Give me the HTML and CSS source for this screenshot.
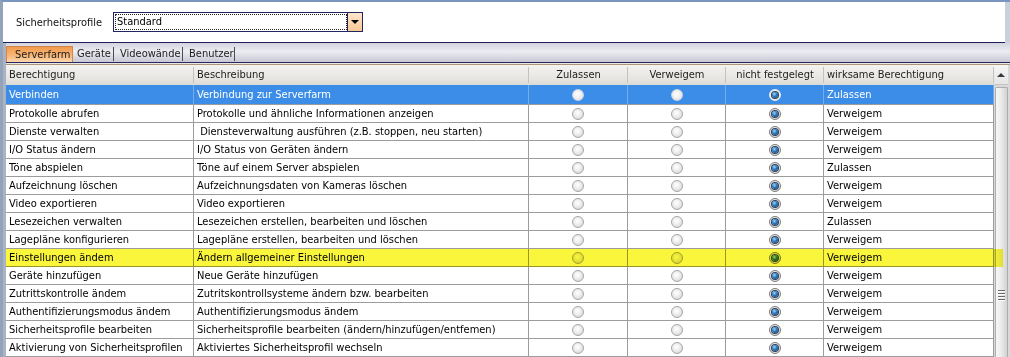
FILE: index.html
```html
<!DOCTYPE html>
<html lang="de">
<head>
<meta charset="utf-8">
<title>Sicherheitsprofile</title>
<link rel="stylesheet" href="styles.css">
</head>
<body>
<div class="window">
  <div class="top">
    <span class="label">Sicherheitsprofile</span>
    <div class="combo">
      <span class="combo-value">Standard</span>
      <span class="combo-btn"><span class="tri-down"></span></span>
    </div>
  </div>
  <div class="lower">
    <div class="tabstrip">
      <div class="tab active">Serverfarm</div>
      <div class="tab t2">Geräte</div>
      <div class="tab t3">Videowände</div>
      <div class="tab t4">Benutzer</div>
    </div>
    <div class="sep"></div>
    <div class="gridwrap">
      <div class="grid">
        <div class="row head">
          <div>Berechtigung</div>
          <div>Beschreibung</div>
          <div class="c">Zulassen</div>
          <div class="c">Verweigem</div>
          <div class="c">nicht festgelegt</div>
          <div>wirksame Berechtigung</div>
        </div>
        <div class="row first sel">
          <div>Verbinden</div><div>Verbindung zur Serverfarm</div>
          <div class="r"><span class="radio"></span></div><div class="r"><span class="radio"></span></div><div class="r"><span class="radio on"></span></div>
          <div>Zulassen</div>
        </div>
        <div class="row">
          <div>Protokolle abrufen</div><div>Protokolle und ähnliche Informationen anzeigen</div>
          <div class="r"><span class="radio"></span></div><div class="r"><span class="radio"></span></div><div class="r"><span class="radio on"></span></div>
          <div>Verweigem</div>
        </div>
        <div class="row">
          <div>Dienste verwalten</div><div>&nbsp;Diensteverwaltung ausführen (z.B. stoppen, neu starten)</div>
          <div class="r"><span class="radio"></span></div><div class="r"><span class="radio"></span></div><div class="r"><span class="radio on"></span></div>
          <div>Verweigem</div>
        </div>
        <div class="row">
          <div>I/O Status ändern</div><div>I/O Status von Geräten ändern</div>
          <div class="r"><span class="radio"></span></div><div class="r"><span class="radio"></span></div><div class="r"><span class="radio on"></span></div>
          <div>Verweigem</div>
        </div>
        <div class="row">
          <div>Töne abspielen</div><div>Töne auf einem Server abspielen</div>
          <div class="r"><span class="radio"></span></div><div class="r"><span class="radio"></span></div><div class="r"><span class="radio on"></span></div>
          <div>Zulassen</div>
        </div>
        <div class="row">
          <div>Aufzeichnung löschen</div><div>Aufzeichnungsdaten von Kameras löschen</div>
          <div class="r"><span class="radio"></span></div><div class="r"><span class="radio"></span></div><div class="r"><span class="radio on"></span></div>
          <div>Verweigem</div>
        </div>
        <div class="row">
          <div>Video exportieren</div><div>Video exportieren</div>
          <div class="r"><span class="radio"></span></div><div class="r"><span class="radio"></span></div><div class="r"><span class="radio on"></span></div>
          <div>Verweigem</div>
        </div>
        <div class="row">
          <div>Lesezeichen verwalten</div><div>Lesezeichen erstellen, bearbeiten und löschen</div>
          <div class="r"><span class="radio"></span></div><div class="r"><span class="radio"></span></div><div class="r"><span class="radio on"></span></div>
          <div>Zulassen</div>
        </div>
        <div class="row">
          <div>Lagepläne konfigurieren</div><div>Lagepläne erstellen, bearbeiten und löschen</div>
          <div class="r"><span class="radio"></span></div><div class="r"><span class="radio"></span></div><div class="r"><span class="radio on"></span></div>
          <div>Verweigem</div>
        </div>
        <div class="row">
          <div>Einstellungen ändem</div><div>Ändern allgemeiner Einstellungen</div>
          <div class="r"><span class="radio"></span></div><div class="r"><span class="radio"></span></div><div class="r"><span class="radio on"></span></div>
          <div>Verweigem</div>
        </div>
        <div class="row">
          <div>Geräte hinzufügen</div><div>Neue Geräte hinzufügen</div>
          <div class="r"><span class="radio"></span></div><div class="r"><span class="radio"></span></div><div class="r"><span class="radio on"></span></div>
          <div>Verweigem</div>
        </div>
        <div class="row">
          <div>Zutrittskontrolle ändem</div><div>Zutritskontrollsysteme ändern bzw. bearbeiten</div>
          <div class="r"><span class="radio"></span></div><div class="r"><span class="radio"></span></div><div class="r"><span class="radio on"></span></div>
          <div>Verweigem</div>
        </div>
        <div class="row">
          <div>Authentifizierungsmodus ändem</div><div>Authentifizierungsmodus ändem</div>
          <div class="r"><span class="radio"></span></div><div class="r"><span class="radio"></span></div><div class="r"><span class="radio on"></span></div>
          <div>Verweigem</div>
        </div>
        <div class="row">
          <div>Sicherheitsprofile bearbeiten</div><div>Sicherheitsprofile bearbeiten (ändern/hinzufügen/entfemen)</div>
          <div class="r"><span class="radio"></span></div><div class="r"><span class="radio"></span></div><div class="r"><span class="radio on"></span></div>
          <div>Verweigem</div>
        </div>
        <div class="row">
          <div>Aktivierung von Sicherheitsprofilen</div><div>Aktiviertes Sicherheitsprofil wechseln</div>
          <div class="r"><span class="radio"></span></div><div class="r"><span class="radio"></span></div><div class="r"><span class="radio on"></span></div>
          <div>Verweigem</div>
        </div>
      </div>
      <div class="scrollbar">
        <div class="sb-up"><span class="tri-up"></span></div>
        <div class="sb-thumb">
          <div class="grip"><i></i><i></i><i></i><i></i></div>
        </div>
      </div>
      <div class="highlight"></div>
    </div>
  </div>
</div>
</body>
</html>
```

FILE: styles.css
```css
html, body {
  margin: 0;
  padding: 0;
  background: #c9d1dc;
}
body {
  font-family: "DejaVu Sans Condensed", "DejaVu Sans", sans-serif;
  font-size: 11px;
  color: #000;
}
.window {
  width: 1010px;
  height: 357px;
  overflow: hidden;
  box-sizing: border-box;
  border-top: 2px solid #7995c0;
  border-left: 3px solid #93a3ba;
  background: #c9d1dc;
}
.top {
  height: 40px;
  margin-right: 5px;
  background: #fff;
  border-bottom: 1px solid #1f1f5e;
  display: flex;
  align-items: center;
  padding-left: 13px;
}
.label {
  width: 97px;
  color: #111;
}
.combo {
  width: 250px;
  height: 20px;
  box-sizing: border-box;
  border: 1px solid #23235f;
  display: flex;
  background: #fff;
}
.combo-value {
  flex: 1;
  margin: 1px 0 1px 1px;
  border: 1px dotted #222;
  padding-left: 1px;
  line-height: 14px;
}
.combo-btn {
  width: 14px;
  border-left: 1px solid #23235f;
  background: linear-gradient(#fde6cc, #f9c896);
  display: flex;
  align-items: center;
  justify-content: center;
}
.tri-down {
  width: 0;
  height: 0;
  border-left: 4px solid transparent;
  border-right: 4px solid transparent;
  border-top: 4px solid #000;
}
.lower {
  border-left: 3px solid #a9b3c4;
}
.tabstrip {
  height: 19px;
  border-bottom: 1px solid #27275f;
  background: linear-gradient(#d4d4df, #ececf1 45%, #c8c8d6);
  display: flex;
  align-items: flex-end;
}
.tab {
  box-sizing: border-box;
  height: 14px;
  line-height: 13px;
  color: #1c1c1c;
  border-right: 1px solid #4a4a5a;
  margin-bottom: 1px;
  white-space: nowrap;
}
.tab.active {
  width: 67px;
  height: 16px;
  line-height: 15px;
  margin-bottom: 0;
  padding-left: 8px;
  border: 1px solid #d0864a;
  border-bottom: none;
  background: linear-gradient(#f39a4c, #f8b676 55%, #fcd6ac);
}
.t2 { width: 41px; padding-left: 4px; }
.t3 { width: 69px; padding-left: 6px; }
.t4 { width: 52px; padding-left: 6px; }
.sep {
  height: 1px;
  background: #ebe8e3;
}
.gridwrap {
  position: relative;
  display: flex;
  height: 300px;
  border-top: 1px solid #ab967c;
  background: #fff;
}
.grid {
  width: 988px;
}
.row {
  display: grid;
  grid-template-columns: 188px 335px 99px 98px 98px 170px;
  height: 18px;
}
.row > div {
  box-sizing: border-box;
  border-right: 1px solid #9c9c9c;
  border-bottom: 1px solid #9c9c9c;
  padding-left: 3px;
  line-height: 17px;
  white-space: nowrap;
  overflow: hidden;
}
.row.first {
  height: 20px;
}
.row.first > div {
  line-height: 19px;
}
.row .r {
  padding-left: 0;
  display: flex;
  align-items: center;
  justify-content: center;
}
.row.head {
  height: 20px;
  background: linear-gradient(#f4f3f0, #e6e5e1 70%, #dcdad5);
}
.row.head > div {
  position: relative;
  border-right: none;
  border-bottom: none;
  line-height: 20px;
  color: #1c1c1c;
}
.row.head > div::after {
  content: "";
  position: absolute;
  right: 0;
  top: 2px;
  bottom: 2px;
  width: 1px;
  background: #c6c3bd;
  box-shadow: 1px 0 0 #fbfbfa;
}
.row.head > .c {
  padding-left: 0;
  text-align: center;
}
.row.sel > div {
  background: #3b8de8;
  color: #fff;
  border-right-color: #74adec;
}
.radio {
  width: 12px;
  height: 12px;
  box-sizing: border-box;
  border-radius: 50%;
  border: 1px solid #a6a6a6;
  background: radial-gradient(circle at 45% 40%, #ffffff 0, #f1f1f1 35%, #d0d0d0 100%);
  display: flex;
  align-items: center;
  justify-content: center;
}
.radio.on {
  border-color: #7c7c7c;
}
.radio.on::after {
  content: "";
  width: 6px;
  height: 6px;
  border-radius: 50%;
  background: radial-gradient(circle at 40% 35%, #a6d8f8 0, #2f7fc4 40%, #0c3260 100%);
  box-shadow: 0 0 0 1px #2b3d57;
}
.row.sel .radio {
  border-color: #c8d3e3;
  background: radial-gradient(circle at 45% 40%, #ffffff 0, #f2f2f2 40%, #dcdcdc 100%);
}
.row.sel .radio.on {
  border-color: #e8eef6;
}
.scrollbar {
  width: 16px;
  display: flex;
  flex-direction: column;
  background: #d9d9d9;
}
.sb-up {
  height: 20px;
  box-sizing: border-box;
  margin-right: 2px;
  background: linear-gradient(#f6f6f6, #e5e5e5);
  border-bottom: 1px solid #c4c4c4;
  display: flex;
  align-items: center;
  justify-content: center;
}
.tri-up {
  width: 0;
  height: 0;
  border-left: 4px solid transparent;
  border-right: 4px solid transparent;
  border-bottom: 4px solid #3a3a3a;
}
.sb-thumb {
  flex: 1;
  margin: 2px 2px 0 1px;
  border: 1px solid #adadad;
  border-bottom: none;
  border-radius: 2px 2px 0 0;
  background: linear-gradient(90deg, #f7f7f7, #ececec 45%, #d2d2d2);
  display: flex;
  flex-direction: column;
  align-items: center;
}
.grip {
  margin-top: 202px;
  display: flex;
  flex-direction: column;
  gap: 2px;
}
.grip i {
  display: block;
  width: 7px;
  height: 1px;
  background: #6a6a6a;
  box-shadow: 0 1px 0 #fff;
}
.highlight {
  position: absolute;
  left: 0;
  top: 184px;
  width: 997px;
  height: 18px;
  background: #faf63c;
  mix-blend-mode: multiply;
}
```
